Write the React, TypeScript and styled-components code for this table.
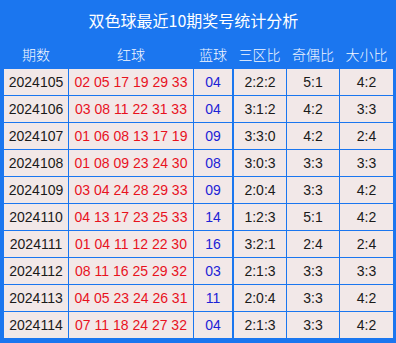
import styled, { createGlobalStyle } from "styled-components";

const GlobalStyle = createGlobalStyle`
  html, body {
    margin: 0;
    padding: 0;
    background: #ffffff;
  }
`;

type Draw = {
  issue: string;
  red: string;
  blue: string;
  zone: string;
  oddEven: string;
  bigSmall: string;
};

const draws: Draw[] = [
  { issue: "2024105", red: "02 05 17 19 29 33", blue: "04", zone: "2:2:2", oddEven: "5:1", bigSmall: "4:2" },
  { issue: "2024106", red: "03 08 11 22 31 33", blue: "04", zone: "3:1:2", oddEven: "4:2", bigSmall: "3:3" },
  { issue: "2024107", red: "01 06 08 13 17 19", blue: "09", zone: "3:3:0", oddEven: "4:2", bigSmall: "2:4" },
  { issue: "2024108", red: "01 08 09 23 24 30", blue: "08", zone: "3:0:3", oddEven: "3:3", bigSmall: "3:3" },
  { issue: "2024109", red: "03 04 24 28 29 33", blue: "09", zone: "2:0:4", oddEven: "3:3", bigSmall: "4:2" },
  { issue: "2024110", red: "04 13 17 23 25 33", blue: "14", zone: "1:2:3", oddEven: "5:1", bigSmall: "4:2" },
  { issue: "2024111", red: "01 04 11 12 22 30", blue: "16", zone: "3:2:1", oddEven: "2:4", bigSmall: "2:4" },
  { issue: "2024112", red: "08 11 16 25 29 32", blue: "03", zone: "2:1:3", oddEven: "3:3", bigSmall: "3:3" },
  { issue: "2024113", red: "04 05 23 24 26 31", blue: "11", zone: "2:0:4", oddEven: "3:3", bigSmall: "4:2" },
  { issue: "2024114", red: "07 11 18 24 27 32", blue: "04", zone: "2:1:3", oddEven: "3:3", bigSmall: "4:2" },
];

const COLUMNS = "64px 124px 38px 53px 52px 53px";

const Board = styled.div`
  width: 396px;
  height: 343px;
  box-sizing: border-box;
  background: #1b76ef;
  padding: 0 3px 5px 4px;
  display: flex;
  flex-direction: column;
  font-family: "Liberation Sans", "Noto Sans CJK SC", Arial, sans-serif;
`;

const Title = styled.div`
  height: 38px;
  display: flex;
  align-items: center;
  justify-content: center;
  color: #ffffff;
  font-size: 16px;
  font-family: "Noto Sans CJK SC", "Liberation Sans", sans-serif;
  padding-right: 10px;
  padding-top: 2px;
  box-sizing: border-box;
`;

const HeaderRow = styled.div`
  height: 30px;
  display: grid;
  grid-template-columns: ${COLUMNS};
  column-gap: 1px;
`;

const HeaderCell = styled.div`
  display: flex;
  align-items: center;
  justify-content: center;
  color: #f4f8ff;
  font-size: 14px;
  font-weight: 300;
  font-family: "Noto Sans CJK SC", "Liberation Sans", sans-serif;
  padding-top: 1px;
`;

const Body = styled.div`
  margin-top: 1px;
  display: grid;
  grid-template-columns: ${COLUMNS};
  grid-auto-rows: 26px;
  gap: 1px;
`;

const Cell = styled.div<{ $tone?: "red" | "blue"; $divider?: boolean }>`
  background: #f2e8e8;
  display: flex;
  align-items: center;
  justify-content: center;
  font-size: 14px;
  color: ${({ $tone }) =>
    $tone === "red" ? "#e8121e" : $tone === "blue" ? "#1c22d6" : "#1a1a1a"};
  border-left: ${({ $divider }) => ($divider ? "1px solid #1b76ef" : "none")};
`;

const headers = ["期数", "红球", "蓝球", "三区比", "奇偶比", "大小比"];

export default function App() {
  return (
    <>
      <GlobalStyle />
      <Board>
        <Title>双色球最近10期奖号统计分析</Title>
        <HeaderRow>
          {headers.map((h) => (
            <HeaderCell key={h}>{h}</HeaderCell>
          ))}
        </HeaderRow>
        <Body>
          {draws.map((d) => [
            <Cell key={d.issue + "i"}>{d.issue}</Cell>,
            <Cell key={d.issue + "r"} $tone="red">{d.red}</Cell>,
            <Cell key={d.issue + "b"} $tone="blue">{d.blue}</Cell>,
            <Cell key={d.issue + "z"} $divider>{d.zone}</Cell>,
            <Cell key={d.issue + "o"}>{d.oddEven}</Cell>,
            <Cell key={d.issue + "s"}>{d.bigSmall}</Cell>,
          ])}
        </Body>
      </Board>
    </>
  );
}
